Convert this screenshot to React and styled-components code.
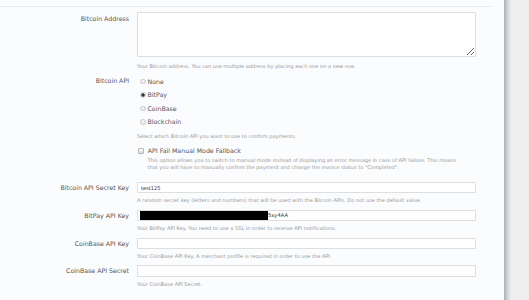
import React from "react";
import styled, { createGlobalStyle } from "styled-components";

const Global = createGlobalStyle`
  html, body { margin: 0; padding: 0; background: #eeeeee; }
  body { font-family: "DejaVu Sans", Verdana, sans-serif; }
  * { box-sizing: border-box; }
`;

const Page = styled.div`
  display: flex;
  width: 529px;
  height: 300px;
  overflow: hidden;
  background: #eeeeee;
`;

const Panel = styled.div`
  width: 504px;
  flex: none;
  background: #fbfcfe;
  padding-top: 6px;
`;

const Shadow = styled.div`
  width: 7px;
  flex: none;
  background: linear-gradient(to right, #a9b0bb, #c9ced5 40%, #e2e4e7 80%, #eeeeee);
`;

const TopRule = styled.div`
  width: 492px;
  height: 1px;
  background: #e1edf1;
  margin-bottom: 5px;
`;

const Row = styled.div`
  display: grid;
  grid-template-columns: 129px 339px;
  column-gap: 8px;
  margin-bottom: ${(p) => p.$gap ?? 5.3}px;
`;

const Label = styled.div`
  text-align: right;
  font-size: 6.25px;
  line-height: ${(p) => p.$lh ?? 11.5}px;
  padding-top: ${(p) => p.$pad ?? 0}px;
  color: #555;
  white-space: nowrap;
`;

const Field = styled.div`
  display: flex;
  flex-direction: column;
`;

const TextArea = styled.textarea`
  display: block;
  width: 339px;
  height: 45px;
  margin: 0;
  border: 1px solid #dedede;
  border-radius: 1px;
  background: #fff;
  resize: vertical;
  font-family: inherit;
  font-size: 5px;
`;

const Input = styled.input`
  display: block;
  width: 339px;
  height: 11.5px;
  margin: 0;
  padding: 0 3px;
  border: 1px solid #dedede;
  border-radius: 1px;
  background: #fff;
  font-family: "DejaVu Sans", Verdana, sans-serif;
  font-size: 5.1px;
  color: #333;
  outline: none;
`;

const MaskedBox = styled.div`
  display: flex;
  align-items: center;
  width: 339px;
  height: 11.5px;
  padding: 0 2px;
  border: 1px solid #dedede;
  border-radius: 1px;
  background: #fff;
  font-size: 5.2px;
  color: #333;
`;

const Redaction = styled.span`
  display: inline-block;
  width: 128px;
  height: 9px;
  background: #000;
`;

const Help = styled.div`
  font-size: 5.08px;
  line-height: 8px;
  color: #999;
  margin-top: ${(p) => p.$top ?? 3}px;
  white-space: nowrap;
`;

const RadioList = styled.div`
  display: flex;
  flex-direction: column;
  padding-top: 1px;
`;

const RadioOption = styled.label`
  display: flex;
  align-items: center;
  height: 13.5px;
  font-size: 6.25px;
  color: #555;
  padding-left: 3px;
`;

const RadioDot = styled.span`
  width: 5.5px;
  height: 5.5px;
  border-radius: 50%;
  margin-right: 2px;
  border: 0.6px solid #c8c8c8;
  background: ${(p) =>
    p.$checked
      ? "radial-gradient(circle, #333 0 1.2px, #777 1.6px, #e9e9e9 2px)"
      : "radial-gradient(circle at 50% 35%, #fafafa, #dcdcdc)"};
  flex: none;
`;

const CheckRow = styled.label`
  display: flex;
  align-items: center;
  height: 8px;
  font-size: 6.25px;
  color: #555;
  margin-top: 7px;
  padding-left: 1px;
`;

const CheckBox = styled.span`
  width: 6.3px;
  height: 6.3px;
  border: 0.7px solid #b5b5b5;
  border-radius: 1px;
  background: linear-gradient(#fdfdfd, #dedede);
  margin-right: 3.5px;
  flex: none;
`;

const Desc = styled.div`
  font-size: 5.05px;
  line-height: 7.6px;
  color: #999;
  padding-left: 10.5px;
  margin-top: 2px;
  margin-bottom: 10px;
  white-space: nowrap;
`;

const apis = ["None", "BitPay", "CoinBase", "Blockchain"];

export default function App() {
  return (
    <Page>
      <Global />
      <Panel>
        <TopRule />
        <Row $gap={3.85}>
          <Label $lh={12} $pad={1}>Bitcoin Address</Label>
          <Field>
            <TextArea />
            <Help $top={4.7}>
              Your Bitcoin address. You can use multiple address by placing each one on a new row.
            </Help>
          </Field>
        </Row>
        <Row $gap={0}>
          <Label $lh={12} $pad={1.5}>Bitcoin API</Label>
          <Field>
            <RadioList>
              {apis.map((a) => (
                <RadioOption key={a}>
                  <RadioDot $checked={a === "BitPay"} />
                  {a}
                </RadioOption>
              ))}
            </RadioList>
            <Help $top={3.2}>Select which Bitcoin API you want to use to confirm payments.</Help>
            <CheckRow>
              <CheckBox />
              API Fail Manual Mode Fallback
            </CheckRow>
            <Desc>
              This option allows you to switch to manual mode instead of displaying an error message in case of API failure. This means
              <br />
              that you will have to manually confirm the payment and change the invoice status to "Completed".
            </Desc>
          </Field>
        </Row>
        <Row>
          <Label>Bitcoin API Secret Key</Label>
          <Field>
            <Input defaultValue="test125" />
            <Help>A random secret key (letters and numbers) that will be used with the Bitcoin APIs. Do not use the default value.</Help>
          </Field>
        </Row>
        <Row>
          <Label>BitPay API Key</Label>
          <Field>
            <MaskedBox>
              <Redaction />
              5xy4AA
            </MaskedBox>
            <Help>Your BitPay API Key. You need to use a SSL in order to receive API notifications.</Help>
          </Field>
        </Row>
        <Row>
          <Label>CoinBase API Key</Label>
          <Field>
            <Input />
            <Help>Your CoinBase API Key. A merchant profile is required in order to use the API.</Help>
          </Field>
        </Row>
        <Row>
          <Label>CoinBase API Secret</Label>
          <Field>
            <Input />
            <Help>Your CoinBase API Secret.</Help>
          </Field>
        </Row>
      </Panel>
      <Shadow />
    </Page>
  );
}
